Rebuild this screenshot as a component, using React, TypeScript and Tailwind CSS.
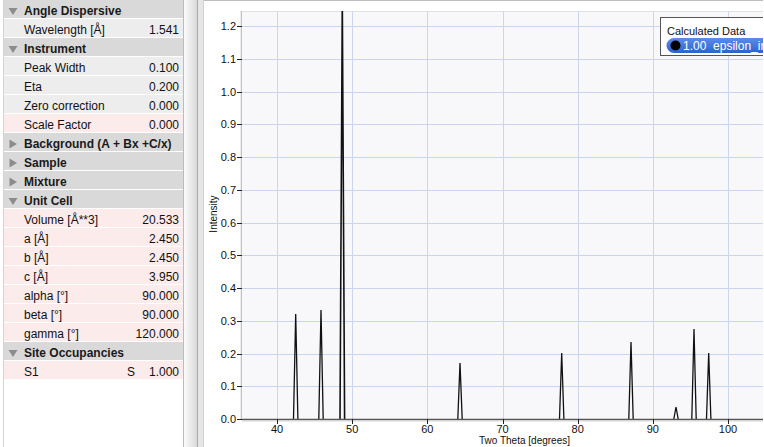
import React from "react";

type Row =
  | { kind: "h"; label: string; open: boolean }
  | { kind: "v"; label: string; value: string; bg: string; mid?: string };

const GREY = "bg-[#ededed]";
const PINK = "bg-[#fcebeb]";

const rows: Row[] = [
  { kind: "h", label: "Angle Dispersive", open: true },
  { kind: "v", label: "Wavelength [Å]", value: "1.541", bg: GREY },
  { kind: "h", label: "Instrument", open: true },
  { kind: "v", label: "Peak Width", value: "0.100", bg: GREY },
  { kind: "v", label: "Eta", value: "0.200", bg: GREY },
  { kind: "v", label: "Zero correction", value: "0.000", bg: GREY },
  { kind: "v", label: "Scale Factor", value: "0.000", bg: PINK },
  { kind: "h", label: "Background (A + Bx +C/x)", open: false },
  { kind: "h", label: "Sample", open: false },
  { kind: "h", label: "Mixture", open: false },
  { kind: "h", label: "Unit Cell", open: true },
  { kind: "v", label: "Volume [Å**3]", value: "20.533", bg: PINK },
  { kind: "v", label: "a [Å]", value: "2.450", bg: PINK },
  { kind: "v", label: "b [Å]", value: "2.450", bg: PINK },
  { kind: "v", label: "c [Å]", value: "3.950", bg: PINK },
  { kind: "v", label: "alpha [°]", value: "90.000", bg: PINK },
  { kind: "v", label: "beta [°]", value: "90.000", bg: PINK },
  { kind: "v", label: "gamma [°]", value: "120.000", bg: PINK },
  { kind: "h", label: "Site Occupancies", open: true },
  { kind: "v", label: "S1", value: "1.000", bg: PINK, mid: "S" },
];

function Tri({ open }: { open: boolean }) {
  return (
    <svg width="10" height="10" viewBox="0 0 10 10" className="shrink-0">
      {open ? (
        <polygon points="0.5,2 9.5,2 5,9" fill="#8c8c8c" />
      ) : (
        <polygon points="1.5,0.5 9,5 1.5,9.5" fill="#8c8c8c" />
      )}
    </svg>
  );
}

const yv = (v: number) => 419 - v * 327.5;
const xv = (v: number) => 278 + (v - 40) * 7.517;

const peaks: [number, number][] = [
  [296.7, 314],
  [322, 310],
  [461, 363],
  [562.7, 353],
  [632, 342],
  [677, 407],
  [695, 329],
  [709.7, 353],
];

function Chart() {
  const yTicks = Array.from({ length: 13 }, (_, i) => i / 10);
  const xTicks = [40, 50, 60, 70, 80, 90, 100];
  const font = "'Liberation Sans', Arial, sans-serif";
  return (
    <svg
      width="559"
      height="447"
      viewBox="205 0 559 447"
      className="block"
      style={{ fontFamily: font }}
    >
      <defs>
        <linearGradient id="pill" x1="0" y1="0" x2="0" y2="1">
          <stop offset="0" stopColor="#5b8de6" />
          <stop offset="1" stopColor="#2d62cf" />
        </linearGradient>
        <clipPath id="plot">
          <rect x="243" y="11" width="530" height="408" />
        </clipPath>
      </defs>
      <rect x="205" y="0" width="559" height="447" fill="#ffffff" />
      <line x1="205" y1="0.5" x2="764" y2="0.5" stroke="#bdbdbd" />
      <rect x="243" y="11" width="530" height="408" fill="#f8f8fa" />
      <line x1="243" y1="11.5" x2="764" y2="11.5" stroke="#e2e2e2" />
      <line x1="242.5" y1="11" x2="242.5" y2="420" stroke="#c4c4c4" />
      <line x1="241.5" y1="11" x2="241.5" y2="420" stroke="#ececec" />
      {yTicks.map((v) => (
        <line
          key={"h" + v}
          x1="243"
          x2="764"
          y1={Math.round(yv(v)) + 0.5}
          y2={Math.round(yv(v)) + 0.5}
          stroke="#cbd6ee"
        />
      ))}
      {xTicks.map((v) => (
        <line
          key={"v" + v}
          y1="11"
          y2="419"
          x1={Math.round(xv(v)) + 0.5}
          x2={Math.round(xv(v)) + 0.5}
          stroke="#cbd6ee"
        />
      ))}
      <g clipPath="url(#plot)" stroke="#111" strokeWidth="1.3" fill="none">
        {peaks.map(([x, t], i) => (
          <polyline key={i} points={`${x - 2.2},419 ${x},${t} ${x + 2.2},419`} />
        ))}
        <polyline points="341,419 343.3,0 345.6,419" strokeWidth="1.6" />
      </g>
      <line x1="243" y1="419.5" x2="764" y2="419.5" stroke="#555" strokeWidth="1.4" />
      <line x1="243" y1="421" x2="764" y2="421" stroke="#d6d6d6" />
      {yTicks.map((v) => (
        <g key={"yt" + v}>
          <line
            x1="238"
            x2="243"
            y1={Math.round(yv(v)) + 0.5}
            y2={Math.round(yv(v)) + 0.5}
            stroke="#222"
          />
          <text x="237" y={yv(v) + 4} fontSize="11" textAnchor="end" fill="#111">
            {v.toFixed(1)}
          </text>
        </g>
      ))}
      {xTicks.map((v) => (
        <g key={"xt" + v}>
          <line
            y1="419"
            y2="424"
            x1={Math.round(xv(v)) + 0.5}
            x2={Math.round(xv(v)) + 0.5}
            stroke="#222"
          />
          <text x={xv(v)} y="433" fontSize="11" textAnchor="middle" fill="#111">
            {v}
          </text>
        </g>
      ))}
      <text x="480" y="443.5" fontSize="10" fill="#111">
        Two Theta [degrees]
      </text>
      <text
        x="0"
        y="0"
        fontSize="10"
        fill="#111"
        textAnchor="middle"
        transform="translate(217.5 214) rotate(-90)"
      >
        Intensity
      </text>
      <rect x="661.5" y="17.5" width="120" height="38" fill="#ffffff" stroke="#555" />
      <text x="668" y="35" fontSize="11" fill="#111">
        Calculated Data
      </text>
      <path d="M675,38 H775 V53 H675 A7.5,7.5 0 0 1 675,38 Z" fill="url(#pill)" />
      <circle cx="676.5" cy="45.5" r="5" fill="#000" />
      <text x="684" y="50" fontSize="12" fill="#ffffff">
        1.00{"\u00a0\u00a0"}epsilon_iron
      </text>
    </svg>
  );
}

export default function App() {
  return (
    <div
      className="flex w-[764px] h-[447px] overflow-hidden bg-white text-[#111]"
      style={{ fontFamily: "'Liberation Sans', Arial, sans-serif" }}
    >
      <div className="w-[184px] shrink-0 pl-[3px] bg-white">
        <div className="h-full border-l border-[#d4d4d4] border-r border-r-[#bcbcbc] bg-white">
          {rows.map((r, i) =>
            r.kind === "h" ? (
              <div
                key={i}
                className="h-[19px] flex items-center pt-[3px] border-b border-white bg-[#d9d9d9]"
              >
                <div className="w-[4px]" />
                <Tri open={r.open} />
                <span className="ml-[6px] text-[12px] font-bold leading-none text-[#1a1a1a]">
                  {r.label}
                </span>
              </div>
            ) : (
              <div
                key={i}
                className={`h-[19px] flex items-center pt-[3px] border-b border-white pl-[20px] pr-[4px] ${r.bg}`}
              >
                <span className="text-[12px] leading-none flex-1">{r.label}</span>
                {r.mid && (
                  <span className="text-[12px] leading-none mr-[14px]">{r.mid}</span>
                )}
                <span className="text-[12px] leading-none">{r.value}</span>
              </div>
            )
          )}
        </div>
      </div>
      <div className="w-[13px] shrink-0 bg-gradient-to-r from-[#fbfbfb] to-[#d9d9d9]" />
      <div className="w-[1px] shrink-0 bg-[#a9a9a9]" />
      <div className="w-[6px] shrink-0 bg-[#e6e6e6] border-r border-[#d0d0d0]" />
      <div className="flex-1 overflow-hidden">
        <Chart />
      </div>
    </div>
  );
}
